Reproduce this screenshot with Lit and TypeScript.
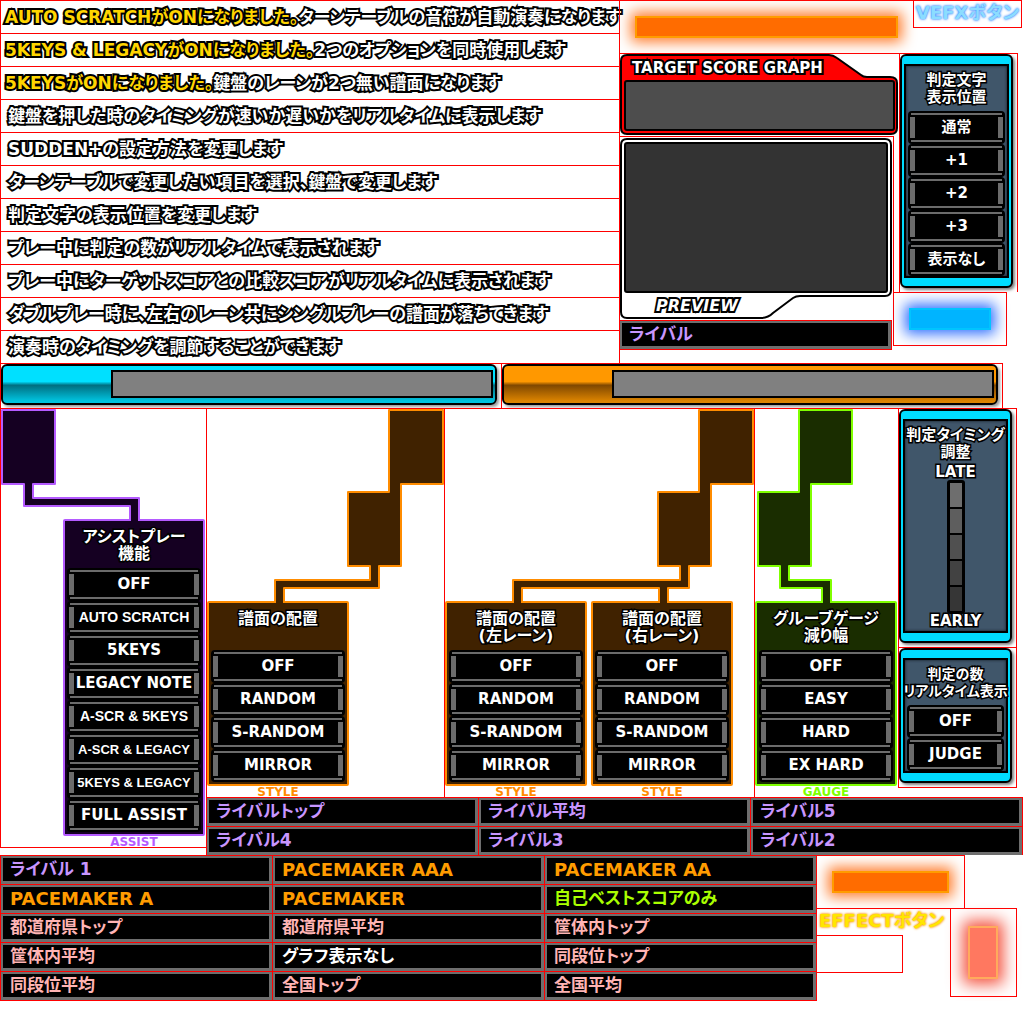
import { LitElement, html, css, svg } from "lit";
import { customElement } from "lit/decorators.js";

interface Message {
  lead?: string;
  text: string;
}

interface Entry {
  label: string;
  tone: string;
}

const MESSAGES: Message[] = [
  { lead: "AUTO SCRATCHがONになりました。", text: "ターンテーブルの音符が自動演奏になります" },
  { lead: "5KEYS & LEGACYがONになりました。", text: "2つのオプションを同時使用します" },
  { lead: "5KEYSがONになりました。", text: "鍵盤のレーンが2つ無い譜面になります" },
  { text: "鍵盤を押した時のタイミングが速いか遅いかをリアルタイムに表示します" },
  { text: "SUDDEN+の設定方法を変更します" },
  { text: "ターンテーブルで変更したい項目を選択、鍵盤で変更します" },
  { text: "判定文字の表示位置を変更します" },
  { text: "プレー中に判定の数がリアルタイムで表示されます" },
  { text: "プレー中にターゲットスコアとの比較スコアがリアルタイムに表示されます" },
  { text: "ダブルプレー時に、左右のレーン共にシングルプレーの譜面が落ちてきます" },
  { text: "演奏時のタイミングを調節することができます" },
];

const RIVALS: Entry[] = ["ライバルトップ", "ライバル平均", "ライバル5", "ライバル4", "ライバル3", "ライバル2"].map(
  (label) => ({ label, tone: "violet" }),
);

const TARGETS: Entry[] = [
  { label: "ライバル 1", tone: "violet" },
  { label: "PACEMAKER AAA", tone: "orange" },
  { label: "PACEMAKER AA", tone: "orange" },
  { label: "PACEMAKER A", tone: "orange" },
  { label: "PACEMAKER", tone: "orange" },
  { label: "自己ベストスコアのみ", tone: "lime" },
  { label: "都道府県トップ", tone: "pink" },
  { label: "都道府県平均", tone: "pink" },
  { label: "筐体内トップ", tone: "pink" },
  { label: "筐体内平均", tone: "pink" },
  { label: "グラフ表示なし", tone: "white" },
  { label: "同段位トップ", tone: "pink" },
  { label: "同段位平均", tone: "pink" },
  { label: "全国トップ", tone: "pink" },
  { label: "全国平均", tone: "pink" },
];

const STYLE_OPTIONS = ["OFF", "RANDOM", "S-RANDOM", "MIRROR"];

const optionButton = (label: string) => {
  const size = label.length > 13 ? "dense" : label.length > 11 ? "snug" : "";
  return html`<button type="button" class="option ${size}">${label}</button>`;
};

const branch = (width: number, height: number, box: string, d: string) => html`
  <svg class="branch" width=${width} height=${height} viewBox=${box} aria-hidden="true">
    ${svg`<path d=${d} />`}
  </svg>
`;

const menu = (title: string[], options: string[], tag: string) => html`
  <div class="menu">
    <section class="menu-box">
      <h2 class="title">${title.map((line) => html`<span>${line}</span>`)}</h2>
      ${options.map(optionButton)}
    </section>
    <p class="tag">${tag}</p>
  </div>
`;

@customElement("app-root")
export class AppRoot extends LitElement {
  static styles = css`
    :host {
      display: block;
      background: #fff;
      color: #fff;
      font-family: "DejaVu Sans", "Noto Sans CJK JP", sans-serif;
      font-weight: 700;
      font-feature-settings: "palt";
      --line: #f00;
    }
    * {
      box-sizing: border-box;
      margin: 0;
      padding: 0;
    }
    ul {
      list-style: none;
    }
    .cell {
      border-top: 1px solid var(--line);
      border-left: 1px solid var(--line);
    }
    .close-right {
      border-right: 1px solid var(--line);
    }
    .close-bottom {
      border-bottom: 1px solid var(--line);
    }

    /* upper area */
    .upper {
      display: grid;
      grid-template-columns: minmax(0, 619fr) minmax(0, 405fr);
    }
    .message {
      height: 33px;
      padding-left: 7px;
      font-size: 17px;
      line-height: 32px;
      white-space: nowrap;
      -webkit-text-stroke: 4px #000;
      paint-order: stroke fill;
      stroke-linejoin: round;
    }
    .message.notice {
      padding-left: 4px;
    }
    .lead {
      color: #ffd500;
    }
    .side {
      border-left: 1px solid var(--line);
    }
    .side-top {
      display: grid;
      grid-template-columns: 293fr 109fr 2fr;
      align-items: start;
    }
    .side-top > .glow-cell {
      border-left: 0;
    }
    .glow-cell {
      display: flex;
      padding: 15px;
      height: 53px;
    }
    .glow {
      flex: 1;
      border: 2px solid;
    }
    .glow.amber {
      background: #ff6c00;
      border-color: #ff9c00;
      box-shadow: 0 0 14px 4px #ff7c2c;
    }
    .glow.azure {
      background: #00b4ff;
      border-color: #00c4ff;
      box-shadow: 0 0 14px 4px #3070ff;
    }
    .glow.coral {
      background: #ff7860;
      border-color: #ffaa5c;
      box-shadow: 0 0 16px 5px #f4503c;
    }
    .caption {
      height: 27px;
      padding-left: 2px;
      font-size: 18px;
      line-height: 24px;
      white-space: nowrap;
    }
    .caption.vefx {
      height: 28px;
      color: #8cdcff;
      text-shadow: 0 0 2px #3c8cff, 0 0 3px #3c8cff;
    }
    .caption.effect {
      color: #ffe600;
      text-shadow: 0 0 2px #ff9600, 0 0 3px #ff9600;
    }
    .side-main {
      display: grid;
      grid-template-columns: 279fr 119fr 6fr;
      align-items: start;
    }
    .screens > .cell {
      border-left: 0;
    }
    .frame {
      display: grid;
    }
    .frame > * {
      grid-area: 1 / 1;
    }
    .frame svg {
      display: block;
    }
    .frame h2 {
      white-space: nowrap;
      -webkit-text-stroke: 4px #000;
      paint-order: stroke fill;
      stroke-linejoin: round;
    }
    .target {
      height: 83px;
    }
    .target h2 {
      padding: 4px 0 0 12px;
      font-size: 15px;
      line-height: 20px;
    }
    .preview {
      height: 184px;
      margin-right: 5px;
    }
    .preview h2 {
      align-self: end;
      padding: 0 0 4px 36px;
      font-size: 16px;
      font-style: italic;
      line-height: 20px;
    }
    .rival-now {
      margin-right: 7px;
    }

    /* cyan panels */
    .panel-cell {
      padding: 0 4px 4px 0;
    }
    .panel {
      padding: 8px 2px;
      border: 2px solid #000;
      border-radius: 6px;
      background: #00dcff;
      box-shadow: 2px 2px 3px rgba(0, 0, 0, 0.5);
    }
    .panel-body {
      padding: 0 2px;
      border: 2px solid #000;
      background: #40566a;
      box-shadow: inset 0 0 3px #101820;
    }
    .title {
      display: flex;
      flex-direction: column;
      align-items: center;
      height: 47px;
      padding-top: 7px;
      font-size: 16px;
      line-height: 17px;
      white-space: nowrap;
      -webkit-text-stroke: 3px #000;
      paint-order: stroke fill;
      stroke-linejoin: round;
    }
    .panel .title {
      height: 45px;
      padding-top: 6px;
      font-size: 15px;
    }
    .panel .title.small {
      font-size: 14px;
    }
    .option {
      display: block;
      width: 100%;
      height: 33px;
      border: 0;
      border-radius: 4px;
      color: #fff;
      font: inherit;
      font-size: 15px;
      line-height: 33px;
      text-align: center;
      white-space: nowrap;
      background:
        linear-gradient(#6b6b6b, #6b6b6b) center 2px / calc(100% - 6px) 2px no-repeat,
        linear-gradient(#6b6b6b, #6b6b6b) center 29px / calc(100% - 6px) 2px no-repeat,
        linear-gradient(#6b6b6b, #6b6b6b) 2px 6px / 5px 21px no-repeat,
        linear-gradient(#6b6b6b, #6b6b6b) right 2px top 6px / 5px 21px no-repeat,
        #000;
    }
    .option.snug {
      font-size: 14px;
      font-family: "Liberation Sans", sans-serif;
    }
    .option.dense {
      font-size: 13px;
      font-family: "Liberation Sans", sans-serif;
    }
    .azure-cell {
      margin: 0 11px 0 -6px;
      height: 54px;
    }

    /* long bars */
    .bars {
      display: grid;
      grid-template-columns: 501fr 502fr 21fr;
    }
    .bar-cell {
      height: 45px;
      padding: 0 4px 3px 0;
    }
    .bar {
      height: 41px;
      padding: 4px 2px 5px 108px;
      border: 2px solid #000;
      border-radius: 6px;
      box-shadow: 2px 2px 3px rgba(0, 0, 0, 0.4);
    }
    .bar.cyan {
      background: linear-gradient(#00e0ff 42%, #006e80 52%, #00c4e0 95%);
    }
    .bar.gold {
      background: linear-gradient(#ff9800 42%, #804800 52%, #dc8400 95%);
    }
    .track {
      height: 28px;
      border: 2px solid #000;
      background: #808080;
    }

    /* option menus */
    .lower {
      display: grid;
      grid-template-columns: 206fr 818fr;
      align-items: start;
    }
    .branches {
      display: grid;
      grid-template-columns: 238fr 310fr 144fr minmax(0, 119fr) 7fr;
      align-items: start;
    }
    .branch-cell {
      height: 389px;
    }
    .assist {
      height: 440px;
      --ink: #150022;
      --edge: #b45aff;
    }
    .style {
      --ink: #402200;
      --edge: #ff8c00;
    }
    .gauge {
      --ink: #1a2d00;
      --edge: #80ff00;
    }
    .branch {
      display: block;
      position: relative;
      margin-bottom: -2px;
    }
    .branch path {
      fill: var(--ink);
      stroke: var(--edge);
      stroke-width: 2;
      stroke-linejoin: round;
    }
    .menus {
      display: flex;
      gap: 4px;
    }
    .assist .menus {
      padding-left: 62px;
    }
    .menu {
      width: 142px;
    }
    .menu-box {
      padding: 0 2px 2px;
      border: 2px solid var(--edge);
      border-radius: 2px;
      background: var(--ink);
    }
    .tag {
      color: var(--edge);
      font-size: 12px;
      line-height: 12px;
      text-align: center;
    }
    .timing {
      display: flex;
      flex-direction: column;
      align-items: center;
      height: 214px;
    }
    .panel .timing .title {
      height: 44px;
    }
    .end-label {
      font-size: 15px;
      line-height: 15px;
      -webkit-text-stroke: 3px #000;
      paint-order: stroke fill;
    }
    .meter {
      display: grid;
      gap: 2px;
      width: 18px;
      padding: 3px;
      border-radius: 3px;
      background: #000;
    }
    .step {
      height: 24px;
    }
    .step:nth-child(1) { background: #6e6e6e; }
    .step:nth-child(2) { background: #5e5e5e; }
    .step:nth-child(3) { background: #505050; }
    .step:nth-child(4) { background: #424242; }
    .step:nth-child(5) { background: #363636; }

    /* score target names */
    .names {
      display: grid;
      grid-template-columns: repeat(3, 1fr);
      border-right: 1px solid var(--line);
    }
    .rivals {
      margin-right: 1px;
    }
    .name {
      height: 28px;
      padding-left: 7px;
      border: 3px solid #6e6e6e;
      border-width: 2px 3px 3px 2px;
      background: #000;
      font-size: 17px;
      line-height: 23px;
      white-space: nowrap;
    }
    .violet { color: #c896ff; }
    .orange { color: #ff9c00; font-size: 18px; }
    .lime { color: #aaff00; }
    .pink { color: #ffb4b4; }
    .white { color: #fff; }
    .bottom {
      display: grid;
      grid-template-columns: 817fr 207fr;
      align-items: start;
    }
    .extras {
      margin-left: -1px;
    }
    .amber-cell {
      margin-right: 59px;
    }
    .extras-row {
      display: grid;
      grid-template-columns: 134fr 67fr 7fr;
      align-items: start;
    }
    .blank {
      height: 38px;
      margin-right: 47px;
    }
    .coral-cell {
      display: flex;
      height: 89px;
      padding: 17px 18px 17px 17px;
    }
  `;

  private nameItem(entry: Entry) {
    return html`<li class="cell"><div class="name ${entry.tone}">${entry.label}</div></li>`;
  }

  private renderUpper() {
    return html`
      <div class="upper">
        <ul>
          ${MESSAGES.map(
            (m) => html`<li class="cell message ${m.lead ? "notice" : ""}">${m.lead
              ? html`<span class="lead">${m.lead}</span>`
              : ""}${m.text}</li>`,
          )}
        </ul>
        <div class="side">
          <div class="side-top">
            <div class="cell glow-cell"><div class="glow amber"></div></div>
            <p class="cell close-right close-bottom caption vefx">VEFXボタン</p>
          </div>
          <div class="side-main">
            <div class="screens">
              <section class="cell frame target">
                <svg width="279" height="82" viewBox="620 54 279 82" aria-hidden="true">
                  <path d="M627 55H829Q833 55 837 58L861 75Q863 77 867 77H890Q897 77 897 83V128Q897 134 891 134H627Q621 134 621 128V61Q621 55 627 55Z" fill="#f00" stroke="#000" stroke-width="2" />
                  <rect x="625" y="81" width="269" height="49" rx="2" fill="#4d4d4d" stroke="#000" stroke-width="2" />
                </svg>
                <h2>TARGET SCORE GRAPH</h2>
              </section>
              <section class="cell close-right frame preview">
                <svg width="273" height="183" viewBox="620 137 273 183" aria-hidden="true">
                  <path d="M627 139H885Q891 139 891 145V290Q891 296 885 296H800Q796 296 793 298L773 313Q768 318 761 318H627Q621 318 621 312V145Q621 139 627 139Z" fill="#fff" stroke="#000" stroke-width="2" />
                  <rect x="625" y="143" width="262" height="149" rx="2" fill="#333" stroke="#000" stroke-width="2" />
                </svg>
                <h2>PREVIEW</h2>
              </section>
              <div class="cell close-right close-bottom rival-now">
                <div class="name violet">ライバル</div>
              </div>
            </div>
            <div>
              <div class="cell close-right panel-cell">
                <section class="panel">
                  <div class="panel-body">
                    <h2 class="title"><span>判定文字</span><span>表示位置</span></h2>
                    ${["通常", "+1", "+2", "+3", "表示なし"].map(optionButton)}
                  </div>
                </section>
              </div>
              <div class="cell close-right close-bottom glow-cell azure-cell"><div class="glow azure"></div></div>
            </div>
          </div>
        </div>
      </div>
    `;
  }

  private renderLower() {
    return html`
      <div class="lower">
        <div class="cell close-bottom assist">
          ${branch(205, 112, "1 409 205 112", "M130 524V506H24V484H2V410H55V484H33V498H139V524Z")}
          <div class="menus">
            ${menu(
              ["アシストプレー", "機能"],
              ["OFF", "AUTO SCRATCH", "5KEYS", "LEGACY NOTE", "A-SCR & 5KEYS", "A-SCR & LEGACY", "5KEYS & LEGACY", "FULL ASSIST"],
              "ASSIST",
            )}
          </div>
        </div>
        <div>
          <div class="branches">
            <div class="cell branch-cell style">
              ${branch(237, 194, "207 409 237 194", "M284 606V588H379V566H401V484H443V410H389V492H348V566H370V580H275V606Z")}
              <div class="menus">${menu(["譜面の配置"], STYLE_OPTIONS, "STYLE")}</div>
            </div>
            <div class="cell branch-cell style">
              ${branch(309, 194, "445 409 309 194", "M513 606V580H680V566H658V492H699V410H753V484H711V566H689V588H668V606H659V588H522V606Z")}
              <div class="menus">
                ${menu(["譜面の配置", "(左レーン)"], STYLE_OPTIONS, "STYLE")}
                ${menu(["譜面の配置", "(右レーン)"], STYLE_OPTIONS, "STYLE")}
              </div>
            </div>
            <div class="cell branch-cell gauge">
              ${branch(143, 194, "755 409 143 194", "M822 606V588H780V566H758V492H799V410H852V484H811V566H789V580H831V606Z")}
              <div class="menus">${menu(["グルーブゲージ", "減り幅"], ["OFF", "EASY", "HARD", "EX HARD"], "GAUGE")}</div>
            </div>
            <div>
              <div class="cell close-right panel-cell">
                <section class="panel">
                  <div class="panel-body timing">
                    <h2 class="title"><span>判定タイミング</span><span>調整</span></h2>
                    <span class="end-label">LATE</span>
                    <div class="meter">${[1, 2, 3, 4, 5].map(() => html`<div class="step"></div>`)}</div>
                    <span class="end-label">EARLY</span>
                  </div>
                </section>
              </div>
              <div class="cell close-right close-bottom panel-cell">
                <section class="panel">
                  <div class="panel-body">
                    <h2 class="title small"><span>判定の数</span><span>リアルタイム表示</span></h2>
                    ${["OFF", "JUDGE"].map(optionButton)}
                  </div>
                </section>
              </div>
            </div>
          </div>
          <ul class="names rivals">${RIVALS.map(this.nameItem)}</ul>
        </div>
      </div>
    `;
  }

  render() {
    return html`
      <main>
        ${this.renderUpper()}
        <div class="bars">
          <div class="cell bar-cell"><div class="bar cyan"><div class="track"></div></div></div>
          <div class="cell close-right bar-cell"><div class="bar gold"><div class="track"></div></div></div>
        </div>
        ${this.renderLower()}
        <div class="bottom">
          <ul class="names close-bottom">${TARGETS.map(this.nameItem)}</ul>
          <div class="extras">
            <div class="cell close-right glow-cell amber-cell"><div class="glow amber"></div></div>
            <div class="extras-row">
              <div>
                <p class="cell caption effect">EFFECTボタン</p>
                <div class="cell close-right close-bottom blank"></div>
              </div>
              <div class="cell close-right close-bottom coral-cell"><div class="glow coral"></div></div>
            </div>
          </div>
        </div>
      </main>
    `;
  }
}
